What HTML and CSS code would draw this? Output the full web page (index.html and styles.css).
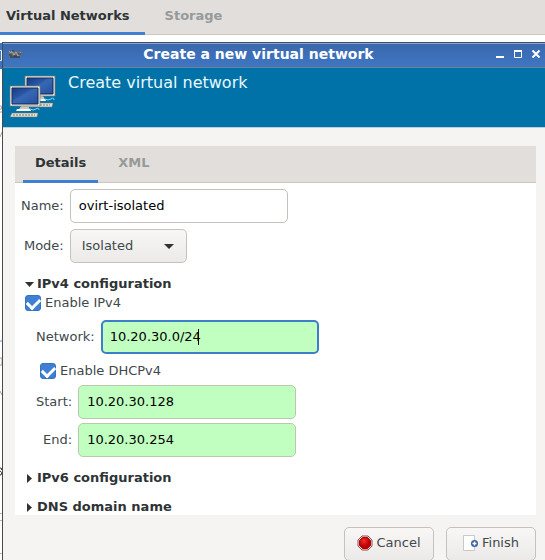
FILE: index.html
```html
<!DOCTYPE html>
<html lang="en">
<head>
<meta charset="utf-8">
<title>Create a new virtual network</title>
<link rel="stylesheet" href="styles.css">
</head>
<body>
<nav class="tabs main-tabs">
  <a class="tab active" href="#networks">Virtual Networks</a>
  <a class="tab" href="#storage">Storage</a>
</nav>
<main class="workspace">
  <div class="behind" aria-hidden="true">
    <svg width="3" height="519" viewBox="0 0 3 519">
      <rect y="1" width="3" height="26" fill="#3c76c4"/>
      <path d="M0 8.500H1.500V18.500H0" fill="none" stroke="#e8f4ff"/>
      <path d="M0 64q2-1 2 3H0M0 70h2M2 90l-2 5M0 349l2 4M0 316h2v7H0" fill="none" stroke="#a0a0a0"/>
      <path d="M0 299h2" stroke="#5f9fcd"/>
      <path d="M0 426q3 0 1.500 2M0 429q3 1 1 4H0" fill="none" stroke="#333"/>
      <path d="M0 471.500h3M0 478.500h3M0 511.500h3" stroke="#bdb9b4"/>
    </svg>
  </div>
  <section class="dialog" aria-labelledby="title">
    <header class="titlebar">
      <svg class="app-icon" width="14" height="8" viewBox="0 0 14 8">
        <path d="M0 1h13v6H1z" fill="#676d74"/>
        <path d="M1 1l2 2 1-2 2 4 2-3 2 4 3-4" fill="none" stroke="#aaa69e"/>
        <path d="M1 5h3M6 6h3M10 4h3M4 1h2M2 7h10" stroke="#30353c"/>
      </svg>
      <h1 id="title">Create a new virtual network</h1>
      <div class="window-controls">
        <button type="button" aria-label="Minimize"><svg width="10" height="10" viewBox="0 0 10 10"><path d="M1 8h8" stroke="#fff" stroke-width="2"/></svg></button>
        <button type="button" aria-label="Maximize"><svg width="10" height="10" viewBox="0 0 10 10"><path d="M1.500 2v6.500h7V2" fill="none" stroke="#fff"/><path d="M1 2h8" stroke="#fff" stroke-width="2"/></svg></button>
        <button type="button" aria-label="Close"><svg width="10" height="10" viewBox="0 0 10 10"><path d="M1.500 1.500l7 7M8.500 1.500l-7 7" stroke="#fff" stroke-width="2"/></svg></button>
      </div>
    </header>
    <div class="banner">
      <svg width="48" height="43" viewBox="0 0 48 43">
        <defs><linearGradient id="screen" x2="1" y2="1"><stop stop-color="#163987"/><stop offset=".5" stop-color="#2f60ae"/><stop offset="1" stop-color="#1c4392"/></linearGradient></defs>
        <g id="computer">
          <path d="M28 21h7l3 5H25z" fill="#c9c9c4"/>
          <path d="M24 24h13l1 2H23z" fill="#f5f5f1"/>
          <path d="M19 28h26l-1 4H17z" fill="#e3e0d3" stroke="#6d7065" stroke-width=".5"/>
          <path d="M20 30h22" stroke="#77796f" stroke-dasharray="2 1"/>
          <path d="M37 24q3 2 6 0t3 1" fill="none" stroke="#8fd1ec"/>
          <path d="M17 1h30v20H17z" fill="#e9e9e2" stroke="#77786f" stroke-width=".7"/>
          <path d="M19 3h26v16H19z" fill="url(#screen)" stroke="#142e61"/>
          <path d="M20 15L39 4h5v14H20z" fill="#5687cb" opacity=".2"/>
        </g>
        <use href="#computer" x="-15" y="10"/>
      </svg>
      <h2>Create virtual network</h2>
    </div>
    <form class="content">
      <div class="notebook">
        <nav class="tabs">
          <a class="tab active" href="#details">Details</a>
          <a class="tab" href="#xml">XML</a>
        </nav>
        <div class="page">
          <div class="fields general">
            <label for="name">Name:</label><input class="entry" id="name" type="text" value="ovirt-isolated">
            <label for="mode">Mode:</label>
            <div class="combo"><select id="mode"><option>Isolated</option></select></div>
          </div>
          <details class="ipv4" open>
            <summary><svg width="9" height="9" viewBox="0 0 9 9"><path d="M0 2h9L4.500 7z"/></svg>IPv4 configuration</summary>
            <label class="check"><input type="checkbox" checked>Enable IPv4</label>
            <div class="row network"><label for="network">Network:</label><input class="entry valid focused" id="network" type="text" value="10.20.30.0/24"><span class="caret"></span></div>
            <label class="check dhcp"><input type="checkbox" checked>Enable DHCPv4</label>
            <div class="fields range">
              <label for="start">Start:</label><input class="entry valid" id="start" type="text" value="10.20.30.128">
              <label for="end">End:</label><input class="entry valid" id="end" type="text" value="10.20.30.254">
            </div>
          </details>
          <details><summary><svg width="9" height="9" viewBox="0 0 9 9"><path d="M2 0v9L7 4.500z"/></svg>IPv6 configuration</summary></details>
          <details><summary><svg width="9" height="9" viewBox="0 0 9 9"><path d="M2 0v9L7 4.500z"/></svg>DNS domain name</summary></details>
        </div>
      </div>
      <footer class="actions">
        <button class="button" type="button"><svg width="16" height="16" viewBox="0 0 16 16"><defs><radialGradient id="stop" cx=".4" cy=".3"><stop stop-color="#ee3030"/><stop offset="1" stop-color="#c00000"/></radialGradient></defs><path d="M5 1h6l4 4v6l-4 4H5l-4-4V5z" fill="#eee" stroke="#8b4c4c"/><path d="M5.500 2.500h5l3 3v5l-3 3h-5l-3-3v-5z" fill="url(#stop)" stroke="#b00000"/></svg>Cancel</button>
        <button class="button" type="button"><svg width="16" height="16" viewBox="0 0 16 16"><path d="M.5.5h11v15H.5z" fill="#fff" stroke="#c8cac5"/><circle cx="11.500" cy="8.500" r="3.500" fill="#365f9f"/><path d="M9.500 8.500h4M11.500 6.500v4" stroke="#fff" stroke-width="1.500"/></svg>Finish</button>
      </footer>
    </form>
  </section>
</main>
</body>
</html>
```
FILE: styles.css
```css
* { box-sizing: border-box; }
body {
  margin: 0;
  min-height: 100vh;
  display: flex;
  flex-direction: column;
  overflow: hidden;
  background: #fff;
  color: #40484b;
  font: 13px/16px "DejaVu Sans", sans-serif;
}
h1, h2 { margin: 0; font-weight: normal; }
input, select, button { font: inherit; }
.tabs {
  display: flex;
  background: #e1dedb;
  border-bottom: 1px solid #ccc7b9;
}
.tab {
  padding: 0 12px;
  margin-bottom: -1px;
  color: #979a9a;
  font-weight: bold;
  line-height: 32px;
  text-decoration: none;
  border-bottom: 3px solid transparent;
}
.tab.active { color: #2e3436; border-color: #3f7fd4; }
.main-tabs { gap: 8px; }
.main-tabs .active { padding: 0 15px 0 6px; }
.workspace { flex: 1; display: flex; padding-top: 7px; }
.behind { width: 3px; margin-right: -1px; overflow: hidden; }
.behind svg { display: block; }
.dialog {
  position: relative;
  flex: 1;
  display: flex;
  flex-direction: column;
  border-left: 1px solid #4a4a4a;
  border-top: 1px solid #3d4e6c;
  background: #f5f4f2;
}
.titlebar {
  display: grid;
  grid-template-columns: 28px 1fr 60px;
  align-items: center;
  height: 25px;
  padding: 0 4px 4px 5px;
  background: linear-gradient(#3a68ad, #3f76c2);
  border-top: 1px solid #8ba6cf;
  border-bottom: 1px solid #6e8298;
}
.titlebar h1 {
  color: #fff;
  font-size: 14px;
  font-weight: bold;
  text-align: center;
}
.window-controls { display: flex; justify-content: flex-end; gap: 8px; }
.window-controls button { display: flex; padding: 0; border: 0; background: none; }
.banner {
  display: flex;
  gap: 12px;
  height: 60px;
  padding: 7px 5px;
  background: #0072a8;
  border-bottom: 1px solid #b8d0da;
}
.banner h2 { color: #e9f8ff; font-size: 16px; line-height: 16px; }
.content { flex: 1; display: flex; flex-direction: column; padding: 18px 9px 0 12px; }
.notebook { background: #fff; }
.notebook .tabs { padding-left: 8px; gap: 8px; }
.notebook .tab { line-height: 34px; }
.page { padding: 6px 6px 0; height: 332px; overflow: hidden; }
.fields {
  display: grid;
  grid-template-columns: max-content 1fr;
  column-gap: 6px;
  align-items: center;
}
.fields > label { text-align: right; }
.general { row-gap: 6px; }
.entry {
  width: 218px;
  height: 34px;
  padding: 0 8px 2px;
  color: #000;
  background: #fff;
  border: 1px solid #c6c1bc;
  border-radius: 5px;
}
.valid { background: #c0ffc0; border-color: #b9c9ae; }
.focused { border: 2px solid #3c7fc9; padding: 0 7px 2px; }
.combo { display: flex; width: 117px; position: relative; }
.combo::after {
  content: "";
  position: absolute;
  right: 13px;
  top: 15px;
  border: 5px solid transparent;
  border-top-color: #2e3436;
  border-bottom: 0;
  pointer-events: none;
}
select {
  width: 100%;
  height: 34px;
  padding: 0 11px;
  appearance: none;
  color: #40484b;
  background: linear-gradient(#f8f7f6, #eceae8);
  border: 1px solid #c6c1bc;
  border-radius: 5px;
}
summary {
  display: flex;
  align-items: center;
  gap: 3px;
  padding-left: 4px;
  color: #2e3436;
  font-weight: bold;
  list-style: none;
}
summary svg { fill: #2e3436; }
.ipv4 { margin: 13px 0 12px; }
details + details { margin-top: 13px; }
.check { display: flex; align-items: center; gap: 4px; padding-left: 4px; margin-top: 3px; }
.check input {
  appearance: none;
  width: 16px;
  height: 16px;
  margin: 0;
  background: #3f80d5;
  border: 1px solid #3473c0;
  border-radius: 3px;
  display: grid;
  place-items: center;
}
.check input::after {
  content: "";
  width: 10px;
  height: 6px;
  border: solid #fff;
  border-width: 0 0 3px 3px;
  transform: translateY(-1px) rotate(-45deg);
}
.row { display: flex; align-items: center; gap: 6px; }
.network { position: relative; padding-left: 15px; margin-top: 9px; }
.caret { position: absolute; left: 177px; top: 9px; width: 1px; height: 16px; background: #000; }
.dhcp { padding-left: 19px; margin-top: 9px; }
.range { padding-left: 15px; margin-top: 6px; row-gap: 4px; }
.actions { display: flex; justify-content: flex-end; gap: 12px; padding-top: 12px; }
.button {
  display: flex;
  align-items: center;
  justify-content: center;
  gap: 3px;
  width: 90px;
  height: 34px;
  padding: 0 0 2px;
  color: #40484b;
  background: linear-gradient(#f8f7f6, #eceae8);
  border: 1px solid #c6c1bc;
  border-radius: 5px;
}
```
